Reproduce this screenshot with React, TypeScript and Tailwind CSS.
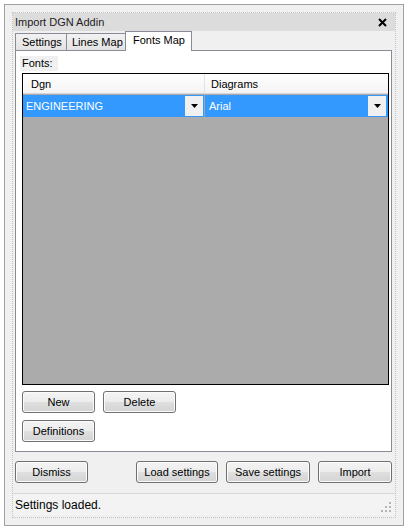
import React from "react";

const font = { fontFamily: '"Liberation Sans", Arial, sans-serif' };

function Btn({ label, w }: { label: string; w: string }) {
  return (
    <div
      className={`${w} h-[22px] flex items-center justify-center rounded-[3px] border border-[#707070] bg-[linear-gradient(to_bottom,#f4f4f4_0%,#ececec_50%,#dfdfdf_51%,#d4d4d4_100%)] shadow-[inset_0_0_0_1px_#fbfbfb] text-[11px] text-black`}
    >
      {label}
    </div>
  );
}

function DropBtn() {
  return (
    <div className="w-[18px] h-[20px] bg-[#f0f0f0] flex items-center justify-center">
      <svg width="7" height="4" viewBox="0 0 7 4">
        <path d="M0 0H7L3.5 4Z" fill="#000" />
      </svg>
    </div>
  );
}

export default function App() {
  return (
    <div className="w-[408px] h-[530px] bg-white pt-[4px] pl-[4px]" style={font}>
      <div className="w-[400px] h-[522px] border border-[#a0a0a0] bg-[#f0f0f0] pt-[7px] pl-[7px]">
        <div className="w-[384px] h-[506px] border border-dotted border-[#c4c4c4] flex flex-col">
          {/* title bar */}
          <div className="h-[18px] bg-[#dcdcdc] flex items-center justify-between pl-[2px] pr-[8px]">
            <span className="text-[11px] text-[#231a23]">Import DGN Addin</span>
            <svg width="9" height="9" viewBox="0 0 9 9">
              <path d="M1 1L8 8M8 1L1 8" stroke="#000" strokeWidth="2" />
            </svg>
          </div>
          {/* tabs */}
          <div className="h-[19px] flex items-end ml-[2px] text-[11px] text-black">
            <div className="w-[52px] h-[17px] border border-b-0 border-[#898c95] bg-[linear-gradient(to_bottom,#f2f2f2,#e3e3e3)] pl-[6px] leading-[16px]">
              Settings
            </div>
            <div className="w-[59px] h-[17px] border border-l-0 border-b-0 border-[#898c95] bg-[linear-gradient(to_bottom,#f2f2f2,#e3e3e3)] pl-[5px] leading-[16px]">
              Lines Map
            </div>
            <div className="relative z-10 -ml-[1px] mb-[-1px] w-[67px] h-[20px] border border-b-0 border-[#898c95] bg-white pl-[7px] leading-[17px]">
              Fonts Map
            </div>
          </div>
          {/* panel */}
          <div className="ml-[2px] w-[377px] h-[402px] border border-[#898c95] bg-white flex flex-col pl-[4px]">
            <div className="mt-[5px] w-[38px] h-[15px] bg-[#f0f0f0] text-[11px] text-black pl-[2px] leading-[15px]">
              Fonts:
            </div>
            <div className="ml-[2px] mt-[2px] w-[367px] h-[312px] border border-black bg-[#ababab] flex flex-col">
              <div className="h-[20px] bg-[linear-gradient(to_bottom,#ffffff,#f3f3f3)] border-b border-[#d5d5d5] flex text-[11px] text-black shadow-[inset_1px_1px_0_#ffffff]">
                <div className="w-[182px] border-r border-[#e3e3e3] pl-[8px] leading-[20px]">Dgn</div>
                <div className="flex-1 pl-[6px] leading-[20px]">Diagrams</div>
              </div>
              <div className="mt-[1px] h-[22px] flex bg-[#3399ff] text-[11px] text-white">
                <div className="w-[181px] flex items-center justify-between pl-[3px] pr-[1px]">
                  <span>ENGINEERING</span>
                  <DropBtn />
                </div>
                <div className="w-[1px] bg-[#9aa6b4]" />
                <div className="flex-1 flex items-center justify-between pl-[4px] pr-[2px]">
                  <span>Arial</span>
                  <DropBtn />
                </div>
              </div>
            </div>
            <div className="mt-[6px] ml-[2px] flex gap-[8px]">
              <Btn label="New" w="w-[73px]" />
              <Btn label="Delete" w="w-[73px]" />
            </div>
            <div className="mt-[7px] ml-[2px] flex">
              <Btn label="Definitions" w="w-[73px]" />
            </div>
          </div>
          {/* bottom buttons */}
          <div className="mt-[9px] ml-[2px] w-[377px] flex">
            <Btn label="Dismiss" w="w-[73px]" />
            <div className="flex-1" />
            <div className="flex gap-[8px]">
              <Btn label="Load settings" w="w-[82px]" />
              <Btn label="Save settings" w="w-[84px]" />
              <Btn label="Import" w="w-[74px]" />
            </div>
          </div>
          {/* status bar */}
          <div className="mt-[10px] h-[22px] border-t border-[#d7d7d7] bg-[#f3f3f3] flex items-center justify-between pl-[2px] pr-[3px]">
            <span className="text-[12px] text-black">Settings loaded.</span>
            <svg width="11" height="11" viewBox="0 0 11 11" className="mt-[6px]">
              <rect x="8" y="0" width="2" height="2" fill="#b5b5b5" />
              <rect x="4" y="4" width="2" height="2" fill="#b5b5b5" />
              <rect x="8" y="4" width="2" height="2" fill="#b5b5b5" />
              <rect x="0" y="8" width="2" height="2" fill="#b5b5b5" />
              <rect x="4" y="8" width="2" height="2" fill="#b5b5b5" />
              <rect x="8" y="8" width="2" height="2" fill="#b5b5b5" />
            </svg>
          </div>
        </div>
      </div>
    </div>
  );
}
